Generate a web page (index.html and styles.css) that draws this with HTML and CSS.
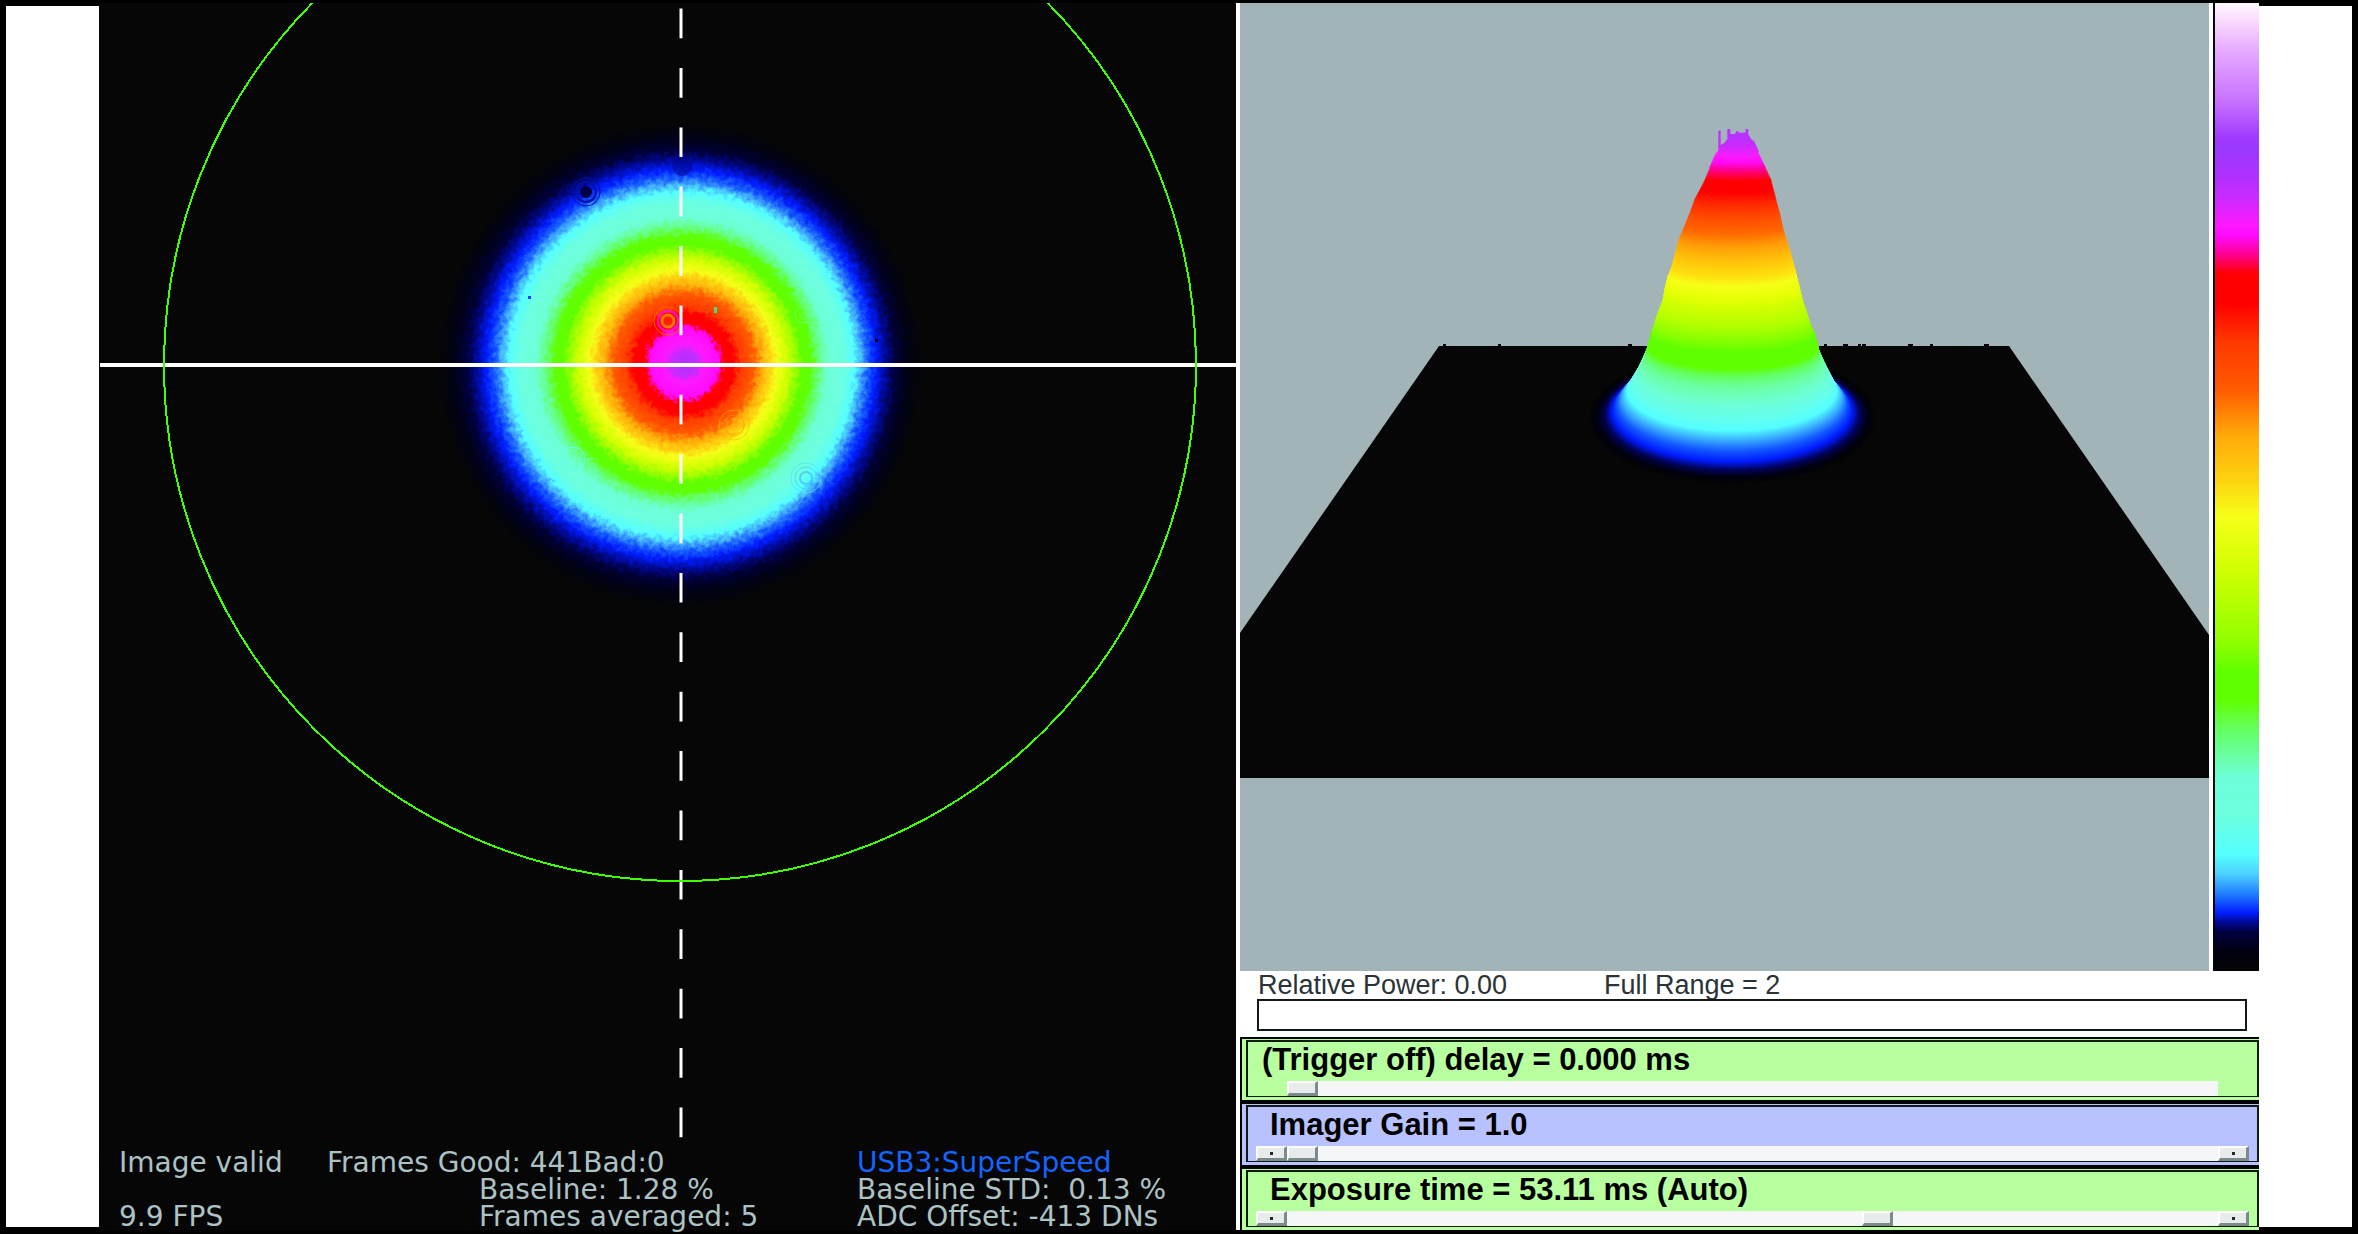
FILE: index.html
```html
<!DOCTYPE html>
<html lang="en">
<head>
  <meta charset="UTF-8">
  <meta name="viewport" content="width=device-width, initial-scale=1.0">
  <title>Beam Profiler</title>
  <link rel="stylesheet" href="styles.css">
</head>
<body>

<div class="frame">
  <div class="side"></div>

  <div class="camera">
    <svg class="beam" viewBox="0 0 1137 1142">
      <defs>
        <radialGradient id="beamColors" gradientUnits="userSpaceOnUse" cx="581" cy="362" r="250" fx="586" fy="360">
          <stop offset="0" stop-color="#b030ff"/>
          <stop offset=".05" stop-color="#c42cff"/>
          <stop offset=".08" stop-color="#ff18ff"/>
          <stop offset=".14" stop-color="#ff0aff"/>
          <stop offset=".16" stop-color="#ff0000"/>
          <stop offset=".2" stop-color="#ff0000"/>
          <stop offset=".23" stop-color="#ff3c00"/>
          <stop offset=".28" stop-color="#ff5c00"/>
          <stop offset=".315" stop-color="#ffae0a"/>
          <stop offset=".345" stop-color="#fdd010"/>
          <stop offset=".375" stop-color="#f6ff18"/>
          <stop offset=".42" stop-color="#ccff00"/>
          <stop offset=".455" stop-color="#90ff00"/>
          <stop offset=".475" stop-color="#60ff00"/>
          <stop offset=".51" stop-color="#60ff00"/>
          <stop offset=".54" stop-color="#64ff70"/>
          <stop offset=".585" stop-color="#6effd8"/>
          <stop offset=".645" stop-color="#6cffe0"/>
          <stop offset=".69" stop-color="#54ffff"/>
          <stop offset=".72" stop-color="#40a8ff"/>
          <stop offset=".745" stop-color="#1860ff"/>
          <stop offset=".78" stop-color="#001cff"/>
          <stop offset=".82" stop-color="#000890"/>
          <stop offset=".86" stop-color="#000038"/>
          <stop offset=".91" stop-color="#010214"/>
          <stop offset=".97" stop-color="#050605"/>
        </radialGradient>
        <filter id="grain" x="0" y="0" width="100%" height="100%" color-interpolation-filters="sRGB">
          <feTurbulence type="fractalNoise" baseFrequency=".2" numOctaves="3" seed="4" result="noise"/>
          <feDisplacementMap in="SourceGraphic" in2="noise" scale="12" xChannelSelector="R" yChannelSelector="G"/>
        </filter>
      </defs>

      <circle cx="581" cy="362" r="250" fill="url(#beamColors)" filter="url(#grain)"/>

      <!-- dust on the sensor -->
      <g fill="none">
        <circle cx="487" cy="189" r="6" fill="#000048"/>
        <circle cx="487" cy="189" r="10" stroke="#0010a0" stroke-width="2"/>
        <circle cx="487" cy="189" r="14" stroke="#0010a0"/>
        <circle cx="583" cy="163" r="10" fill="#000890" opacity=".6"/>
        <circle cx="569" cy="318" r="4" fill="#ff2000"/>
        <circle cx="569" cy="318" r="6" stroke="#ff7800" stroke-width="3"/>
        <circle cx="569" cy="318" r="10" stroke="#ff10d0" stroke-width="2"/>
        <circle cx="569" cy="318" r="14" stroke="#ff6000"/>
        <circle cx="635" cy="422" r="10" stroke="#ff9000" opacity=".6"/>
        <circle cx="635" cy="422" r="15" stroke="#ffb000" opacity=".6"/>
        <circle cx="704" cy="312" r="8" stroke="#64ff70"/>
        <circle cx="707" cy="475" r="6" stroke="#48b8ff" stroke-width="2" opacity=".7"/>
        <circle cx="707" cy="475" r="11" stroke="#48c8ff" opacity=".7"/>
        <circle cx="707" cy="475" r="15" stroke="#54e0ff" opacity=".7"/>
        <circle cx="474" cy="456" r="12" stroke="#60fff4"/>
      </g>
      <rect x="429" y="293" width="3" height="3" fill="#0040ff"/>
      <rect x="615" y="304" width="3" height="6" fill="#40e080"/>
      <rect x="776" y="336" width="3" height="3" fill="#000020"/>

      <path class="axis" d="M1 362H1137"/>
      <path class="axis dashed" d="M582 362V0"/>
      <path class="axis dashed" d="M582 362V1140"/>
      <circle class="aperture" cx="581" cy="362" r="516"/>
    </svg>

    <div class="status">
      <span class="state">Image valid</span>
      <span class="frames">Frames Good: 441Bad:0</span>
      <span class="link">USB3:SuperSpeed</span>
      <span class="detail">Baseline: 1.28 %</span>
      <span class="sensor">Baseline STD:&nbsp; 0.13 %</span>
      <span class="state">9.9 FPS</span>
      <span class="detail">Frames averaged: 5</span>
      <span class="sensor">ADC Offset: -413 DNs</span>
    </div>
  </div>

  <div class="right">
    <div class="views">
      <svg class="surface" viewBox="0 0 969 968">
        <path d="M199 343H769L969 632V775H0V630Z" fill="#050605"/>
        <path d="M203 341h3v3h-3zM258 341h3v3h-3zM388 341h4v3h-4zM584 341h3v3h-3zM603 341h5v3h-5zM618 341h3v3h-3zM622 341h4v3h-4zM668 341h5v3h-5zM690 341h3v3h-3zM744 341h5v3h-5z" fill="#050605"/>
        <g transform="translate(320 97) scale(.3333)">
          <g id="peak"></g>
          <path d="M475 165V92h7v43l15-8 5-8V87h9v15h14l5-10 10 6h12l5-2V87h8v16l10 17 7 2 15 33-20 20H490Z" fill="url(#tip)"/>
        </g>
        <defs>
          <linearGradient id="tip" x1="0" y1="0" x2="0" y2="1">
            <stop offset="0" stop-color="#b038ff"/>
            <stop offset=".5" stop-color="#c42cff"/>
            <stop offset="1" stop-color="#ff18ff"/>
          </linearGradient>
        </defs>
      </svg>
      <div class="palette"></div>
    </div>

    <div class="power">
      <label for="power">Relative Power: 0.00</label>
      <span>Full Range = 2</span>
      <progress id="power" value="0" max="2"></progress>
    </div>

    <div class="controls">
      <div class="control green">
        <div class="control-box">
          <label class="wide" for="delay">(Trigger off) delay = 0.000 ms</label>
          <div class="slider no-steps">
            <input type="range" id="delay" min="0" max="1000" value="0">
          </div>
        </div>
      </div>
      <div class="control blue">
        <div class="control-box">
          <label for="gain">Imager Gain = 1.0</label>
          <div class="slider">
            <button type="button" aria-label="Decrease gain"></button>
            <input type="range" id="gain" min="0" max="1000" value="0">
            <button type="button" aria-label="Increase gain"></button>
          </div>
        </div>
      </div>
      <div class="control green">
        <div class="control-box">
          <label for="exposure">Exposure time = 53.11 ms (Auto)</label>
          <div class="slider">
            <button type="button" aria-label="Decrease exposure"></button>
            <input type="range" id="exposure" min="0" max="1000" value="639">
            <button type="button" aria-label="Increase exposure"></button>
          </div>
        </div>
      </div>
    </div>
  </div>

  <div class="side"></div>
</div>

<script src="script.js"></script>
</body>
</html>
```
FILE: styles.css
```css
* {
  box-sizing: border-box;
}

body {
  margin: 0;
  padding: 3px 6px 4px;
  min-height: 100vh;
  background-color: #000;
  font-family: "Liberation Sans", Arial, sans-serif;
}

.frame {
  display: grid;
  grid-template-columns: 93fr 1137fr 1023fr 93fr;
}

.side {
  background-color: #fff;
  margin: 3px 0;
}

/* camera image */
.camera {
  background-color: #050605;
}

.beam,
.surface {
  display: block;
  width: 100%;
}

.axis {
  stroke: #fff;
  stroke-width: 4;
}

.dashed {
  stroke-width: 3;
  stroke-dasharray: 0 29.7 29.7 0;
}

.aperture {
  fill: none;
  stroke: #40ff00;
  stroke-width: 2;
  shape-rendering: crispEdges;
}

.status {
  display: grid;
  grid-template-columns: 208fr 152fr 378fr 379fr;
  grid-auto-rows: 27px;
  padding: 4px 0 0 20px;
  font-family: "DejaVu Sans", Verdana, sans-serif;
  font-size: 28px;
  line-height: 27px;
  color: #adc2c4;
  white-space: nowrap;
}

.state {
  grid-column: 1;
}

.frames {
  grid-column: 2 / 4;
}

.detail {
  grid-column: 3;
}

.link,
.sensor {
  grid-column: 4;
}

.link {
  color: #1464ff;
}

/* 3D view, palette and controls */
.right {
  background-color: #fff;
  padding-left: 4px;
}

.views {
  display: grid;
  grid-template-columns: 969fr 46fr;
  column-gap: 4px;
}

.surface {
  background-color: #a3b4b8;
}

.palette {
  border-left: 2px solid #050510;
  background: linear-gradient(
    #fff8ff 0%,
    #f8d8fc 2%,
    #e6a8ff 5%,
    #c874ff 10%,
    #a038ff 14%,
    #9a38ff 15%,
    #b030ff 18%,
    #c82cff 20%,
    #ff18ff 23%,
    #ff0aff 24%,
    #ff0090 26%,
    #ff0000 28%,
    #ff0000 31%,
    #ff3800 35%,
    #ff5c00 40%,
    #ffae0a 45%,
    #fdd010 49%,
    #f6ff18 53%,
    #dcff08 57%,
    #c4ff00 60%,
    #90ff00 66%,
    #60ff00 69%,
    #60ff00 72%,
    #64ff60 75%,
    #6effd8 80%,
    #6cffe0 84%,
    #54ffff 88%,
    #4cd0ff 90%,
    #2080ff 92%,
    #001cff 94%,
    #000890 95%,
    #000040 96%,
    #000010 98%,
    #050505 100%
  );
}

.power {
  display: grid;
  grid-template-columns: 346fr 644fr;
  padding: 0 12px 6px 17px;
  font-size: 27px;
  line-height: 28px;
  color: #2a3438;
}

.power label,
.power span {
  padding-left: 1px;
}

.power progress {
  grid-column: 1 / 3;
  appearance: none;
  width: 100%;
  height: 32px;
  border: 2px solid #101818;
  background-color: #fff;
}

.power progress::-webkit-progress-bar {
  background-color: #fff;
}

.controls {
  display: grid;
  gap: 4px;
  padding: 2px 0 0 2px;
  background-color: #000;
}

.control {
  padding: 1px 0 3px 4px;
}

.control-box {
  border: 2px solid #101c10;
  border-bottom-width: 1px;
}

.green {
  background-color: #b8ffa0;
}

.blue {
  background-color: #b8c2ff;
}

.control label {
  display: block;
  height: 39px;
  padding-left: 22px;
  font-size: 31px;
  font-weight: bold;
  line-height: 36px;
  color: #000;
}

.control label.wide {
  padding-left: 14px;
}

.slider {
  display: flex;
  height: 15px;
  padding: 0 8px;
}

.slider.no-steps {
  padding: 0 39px;
}

.slider input {
  appearance: none;
  flex: 1;
  min-width: 0;
  height: 15px;
  margin: 0;
  background-color: #f5f6f7;
}

.slider button,
.slider input::-webkit-slider-thumb {
  appearance: none;
  width: 31px;
  height: 15px;
  padding: 0;
  border: 2px solid;
  border-width: 2px 3px 3px 2px;
  border-color: #fff #7c8a8e #7c8a8e #fff;
  border-radius: 0;
  background-color: #e8ebec;
}

/* small dot on the step buttons */
.slider button::before {
  content: "";
  display: block;
  width: 3px;
  height: 3px;
  margin: auto;
  background-color: #202828;
}
```
FILE: script.js
```javascript
// slices of the peak from the floor up: center x, center y, rx, ry, colour
var slices = [
  [518, 955, 430, 195, [5, 6, 5]],
  [518, 950, 405, 182, [1, 2, 20]],
  [518, 943, 382, 168, [0, 4, 90]],
  [516, 932, 360, 154, [0, 28, 255]],
  [516, 912, 345, 142, [20, 90, 255]],
  [516, 894, 332, 130, [56, 168, 255]],
  [516, 872, 315, 121, [84, 255, 255]],
  [517, 850, 304, 108, [102, 255, 238]],
  [518, 820, 288, 98, [110, 255, 216]],
  [518, 780, 270, 84, [108, 255, 160]],
  [518, 758, 261, 74, [100, 255, 96]],
  [519, 738, 255, 70, [96, 255, 0]],
  [519, 705, 247, 54, [96, 255, 0]],
  [517, 685, 239, 42, [132, 255, 0]],
  [517, 645, 226, 40, [176, 255, 0]],
  [518, 600, 210, 38, [204, 255, 0]],
  [517, 560, 202, 34, [232, 255, 8]],
  [517, 530, 194, 30, [246, 255, 24]],
  [519, 505, 186, 28, [254, 224, 16]],
  [519, 460, 174, 24, [255, 192, 10]],
  [518, 425, 164, 20, [255, 160, 8]],
  [520, 385, 150, 16, [255, 104, 0]],
  [524, 345, 138, 12, [255, 76, 0]],
  [526, 300, 124, 10, [255, 36, 0]],
  [530, 270, 112, 8, [255, 0, 0]],
  [534, 240, 101, 6, [255, 0, 0]],
  [533, 205, 86, 5, [255, 0, 150]],
  [532, 185, 77, 4, [255, 12, 245]],
  [532, 160, 66, 4, [255, 24, 255]],
  [537, 140, 50, 3, [212, 42, 255]],
  [538, 118, 38, 3, [184, 48, 255]]
];

var peak = document.getElementById("peak");
var steps = 16;

function mix(a, b, t) {
  return a + (b - a) * t;
}

for (var i = 0; i < slices.length - 1; i++) {
  var from = slices[i];
  var to = slices[i + 1];
  for (var s = 0; s < steps; s++) {
    var t = s / steps;
    var color = from[4].map(function(c, n) {
      return Math.round(mix(c, to[4][n], t));
    });
    var ellipse = document.createElementNS("http://www.w3.org/2000/svg", "ellipse");
    ellipse.setAttribute("cx", mix(from[0], to[0], t));
    ellipse.setAttribute("cy", mix(from[1], to[1], t));
    ellipse.setAttribute("rx", mix(from[2], to[2], t));
    ellipse.setAttribute("ry", mix(from[3], to[3], t));
    ellipse.setAttribute("fill", "rgb(" + color.join(",") + ")");
    peak.appendChild(ellipse);
  }
}
```
